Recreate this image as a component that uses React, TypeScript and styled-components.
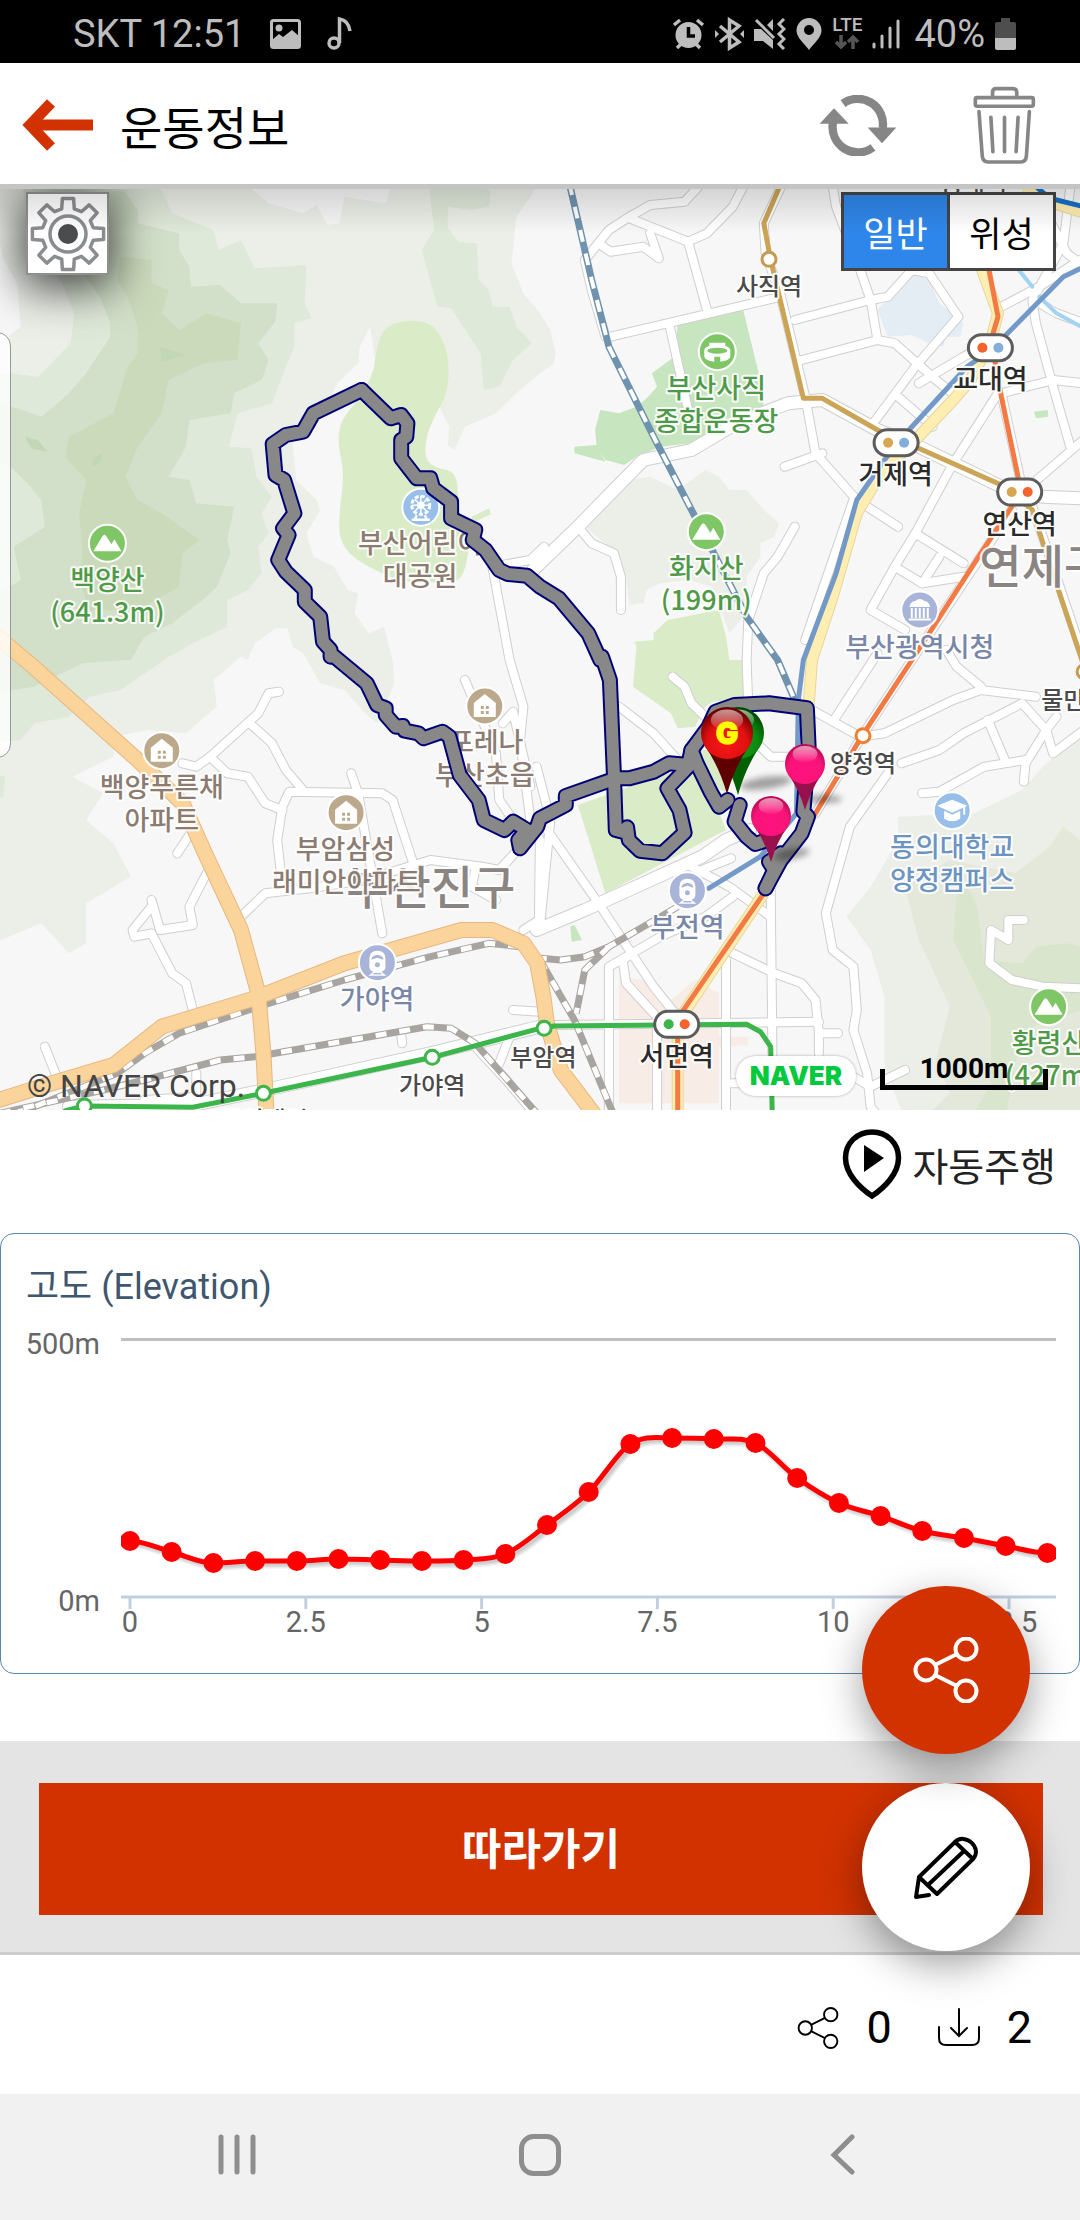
import React from 'react';
import styled, { createGlobalStyle } from 'styled-components';

const GlobalStyle = createGlobalStyle`
  *, *::before, *::after { box-sizing: border-box; }
  body {
    margin: 0;
    background: #fff;
    font-family: Roboto, "Noto Sans CJK KR", sans-serif;
    color: #000;
  }
  button { font: inherit; color: inherit; border: 0; padding: 0; background: none; cursor: pointer; }
  svg { display: block; flex: none; }
`;

/* ---------- layout ---------- */

const Screen = styled.div`
  display: flex;
  flex-direction: column;
  min-height: 100vh;
`;

const StatusBar = styled.div`
  display: flex;
  justify-content: space-between;
  align-items: center;
  height: 63px;
  padding: 4px 64px 0 73px;
  background: #000;
  color: #bdbdbd;
  font-size: 38px;
`;

const StatusGroup = styled.div<{ $gap: number }>`
  display: flex;
  align-items: center;
  gap: ${(p) => p.$gap}px;
`;

const Network = styled.span`
  display: flex;
  flex-direction: column;
  align-items: center;
  gap: 3px;
  font-size: 19px;
  font-weight: 500;
  line-height: 14px;
`;

const Percent = styled.span`
  margin-left: 4px;
`;

const Header = styled.header`
  display: flex;
  align-items: center;
  height: 126px;
  padding: 3px 44px 0 22px;
  border-bottom: 5px solid #c4c4c4;
  background: #fff;
`;

const Title = styled.h1`
  flex: 1;
  margin: 0 0 0 26px;
  font: 400 46px/60px "Noto Sans CJK KR", sans-serif;
`;

const HeaderActions = styled.div`
  display: flex;
  align-items: center;
  gap: 76px;
`;

const IconButton = styled.button`
  display: flex;
  align-items: center;
  justify-content: center;
`;

const MapView = styled.section`
  position: relative;
  height: 921px;
  overflow: hidden;
  background: #f7f7f7;

  &::after {
    content: "";
    position: absolute;
    inset: 0 0 auto;
    height: 44px;
    background: linear-gradient(rgba(0, 0, 0, 0.14), rgba(0, 0, 0, 0));
    pointer-events: none;
  }
`;

const MapSvg = styled.svg`
  width: 100%;
  height: 100%;
`;

const GearButton = styled(IconButton)`
  position: absolute;
  top: 3px;
  left: 26px;
  width: 83px;
  height: 83px;
  border: 2px solid #8f8f8f;
  background: #fff;
  box-shadow: 0 8px 46px 4px rgba(0, 0, 0, 0.75);
`;

const SideHandle = styled.div`
  position: absolute;
  top: 143px;
  left: -20px;
  width: 31px;
  height: 426px;
  border: 1px solid #999;
  border-radius: 14px;
  background: rgba(255, 255, 255, 0.8);
`;

const MapTypes = styled.div`
  position: absolute;
  top: 3px;
  right: 24px;
  display: flex;
  border: 3px solid #444;
  background: #444;
  gap: 3px;
`;

const MapType = styled.button<{ $active?: boolean }>`
  width: 103px;
  height: 73px;
  font: 400 35px/60px "Noto Sans CJK KR", sans-serif;
  color: ${(p) => (p.$active ? '#fff' : '#000')};
  background: ${(p) => (p.$active ? '#2f86ea' : '#fff')};
`;

const MapFooter = styled.div`
  position: absolute;
  left: 27px;
  right: 32px;
  bottom: 8px;
  display: flex;
  align-items: flex-end;
`;

const Copyright = styled.span`
  flex: 1;
  color: #444;
  font-size: 32px;
  line-height: 32px;
`;

const NaverLink = styled.a`
  margin: 0 24px 6px 0;
  width: 120px;
  border-radius: 20px;
  background: #fff;
  box-shadow: 0 0 3px rgba(0, 0, 0, 0.3);
  color: #03c93f;
  font: 900 26px/40px Inter, sans-serif;
  text-align: center;
  text-decoration: none;
`;

const ScaleBar = styled.div`
  position: relative;
  width: 168px;
  height: 21px;
  margin-bottom: 12px;
  border: 5px solid #000;
  border-top: 0;
`;

const ScaleText = styled.span`
  position: absolute;
  inset: auto 0 0;
  text-align: center;
  font-size: 28px;
  font-weight: 700;
  line-height: 32px;
`;

const Details = styled.main`
  position: relative;
  background: #fff;
`;

const AutoRunRow = styled.div`
  display: flex;
  justify-content: flex-end;
  padding: 18px 24px 33px;
`;

const AutoRunButton = styled.button`
  display: flex;
  align-items: center;
  gap: 10px;
  color: #222;
  font: 400 39px/72px "Noto Sans CJK KR", sans-serif;
`;

const Card = styled.section`
  border: 1px solid #5b85ad;
  border-radius: 14px;
  margin-bottom: 67px;
  padding: 26px 0 0;
  min-height: 441px;
`;

const CardTitle = styled.h2`
  margin: 0 25px;
  color: #3e576f;
  font: 400 36px/54px Roboto, "Noto Sans CJK KR", sans-serif;
`;

const Chart = styled.svg`
  width: 100%;
  height: auto;
`;

const ActionArea = styled.div`
  padding: 42px 37px 37px 39px;
  border-bottom: 3px solid #ccc;
  background: #e4e4e4;
`;

const FollowButton = styled.button`
  display: block;
  width: 100%;
  height: 132px;
  padding-bottom: 6px;
  background: #d23200;
  color: #fff;
  font: 700 43px/60px "Noto Sans CJK KR", sans-serif;
`;

const FabStack = styled.div`
  position: absolute;
  right: 50px;
  bottom: 4px;
  display: flex;
  flex-direction: column;
  gap: 29px;
`;

const Fab = styled.button<{ $accent?: boolean }>`
  display: flex;
  align-items: center;
  justify-content: center;
  width: 168px;
  height: 168px;
  border-radius: 50%;
  background: ${(p) => (p.$accent ? '#d23200' : '#fff')};
  color: ${(p) => (p.$accent ? '#fff' : '#000')};
  box-shadow: 0 14px 40px rgba(0, 0, 0, 0.38);

  /* the upper button also shades the one under it */
  ${(p) => (p.$accent ? 'position: relative; z-index: 1;' : '')}
`;

const Stats = styled.footer`
  display: flex;
  justify-content: flex-end;
  align-items: center;
  gap: 46px;
  height: 139px;
  padding: 6px 48px 0 0;
`;

const Stat = styled.span`
  display: flex;
  align-items: center;
  gap: 27px;
  font-size: 45px;
  line-height: 52px;
`;

const NavBar = styled.nav`
  display: grid;
  grid-template-columns: repeat(3, 1fr);
  flex: 1;
  min-height: 126px;
  padding: 0 86px 4px;
  background: #f1f1f1;
`;

/* ---------- map data ---------- */

// Map geometry is kept per sheet; a sheet name in a list switches the origin.
const SHEETS: Record<string, [number, number]> = {
  nw: [0, -9],
  ne: [540, -9],
  sw: [0, 451],
  se: [540, 451],
};

function project(sheet: string, x: number, y: number): [number, number] {
  const [ox, oy] = SHEETS[sheet];
  return [Math.round((ox + x / 2.904) * 10) / 10, Math.round((oy + y / 3) * 10) / 10];
}

function trace(list: string): string {
  const out: string[] = [];
  let sheet = 'nw';
  const tokens = list.trim().split(/\s+/);
  for (let i = 0; i < tokens.length; i++) {
    if (tokens[i] in SHEETS) {
      sheet = tokens[i];
    } else {
      out.push(project(sheet, +tokens[i], +tokens[i + 1]).join(','));
      i++;
    }
  }
  return out.join(' ');
}

function smooth(list: string): string {
  const p = trace(list).split(' ').map((s) => s.split(',').map(Number));
  const mid = (a: number[], b: number[]) => `${(a[0] + b[0]) / 2} ${(a[1] + b[1]) / 2}`;
  const n = p.length;
  let d = `M${mid(p[n - 1], p[0])}`;
  p.forEach((q, i) => {
    d += `Q${q[0]} ${q[1]} ${mid(q, p[(i + 1) % n])}`;
  });
  return d + 'Z';
}

const TERRAIN: [string, string][] = [
  ['#ecefe8', 'nw -20 0 700 0 780 70 880 100 920 75 950 135 985 130 1000 50 1120 70 1140 0 1568 0 1540 50 1500 110 1485 250 1520 340 1568 400 ne 30 450 45 520 40 550 0 580 nw 1500 640 1440 700 1350 740 1320 810 1300 795 1305 740 1280 690 1200 500 1110 500 1090 540 1075 440 1045 500 1040 550 980 610 960 650 850 790 860 900 920 960 930 990 890 1060 910 1130 970 1160 1010 1230 1040 1240 1030 1300 1070 1360 1115 1340 1140 1440 sw 1145 130 1130 170 1095 250 1060 220 1000 150 930 130 880 40 nw 850 1400 835 1345 800 1345 740 1390 720 1440 sw 700 50 620 120 630 200 540 280 430 270 330 290 330 350 210 410 300 460 250 540 330 610 380 710 250 790 250 910 200 940 120 850 -20 910'],
  ['#f7f7f7', 'nw -20 100 10 240 50 310 60 440 0 490 -20 490'],
  ['#dfe9d9', 'nw 60 0 240 0 470 30 500 100 620 150 635 210 700 180 740 265 890 255 885 370 905 415 855 430 855 500 830 560 790 670 690 700 665 800 730 805 745 890 790 950 760 1000 780 1060 750 1100 760 1180 720 1230 660 1260 660 1340 560 1390 490 1430 sw 490 50 350 150 260 170 200 230 100 250 60 300 -20 310 nw -20 590 30 580 110 590 205 490 215 400 180 310 100 200'],
  ['#dfe9d9', 'nw 1245 0 1425 30 1420 80 1370 90 1300 80 1300 140 1330 185 1385 190 1390 300 1420 330 1430 380 1480 380 1500 440 1545 490 1490 540 1450 620 1405 630 1395 520 1310 385 1270 380 1225 210 1260 150'],
  ['#dfe9d9', 'sw -20 400 15 410 10 470 -20 480'],
  ['#d3e0c9', 'nw 200 50 360 30 400 90 400 130 520 160 520 210 550 260 555 320 640 315 700 370 805 370 800 425 750 490 780 540 760 600 680 640 670 700 550 720 540 800 490 890 550 900 570 970 680 980 660 1080 670 1120 630 1220 600 1250 500 1330 420 1370 380 1440 sw 370 60 240 70 100 140 -20 160 nw -20 1250 60 1200 40 1100 130 1040 120 960 80 910 30 860 -20 840 -20 660 120 710 200 640 250 580 320 470 320 430 290 350 240 280'],
  ['#ccdabc', 'nw 350 230 440 240 440 310 490 330 470 400 520 450 600 400 700 430 690 540 590 550 490 600 470 700 400 800 365 890 400 960 470 1000 580 1080 530 1120 520 1220 400 1290 260 1290 230 1200 240 1120 230 1000 250 900 190 830 200 770 330 700 370 560 400 520 400 440 370 350 340 300'],
  ['#c2d7b5', 'nw 465 500 540 525 470 545'],
  ['#c2d7b5', 'nw 270 835 300 815 290 850 270 860'],
  ['#c2d7b5', 'nw 72 770 110 780 138 815 90 805'],
  ['#ecefe8', 'ne 130 1040 180 960 260 900 320 890 400 930 480 870 520 890 550 930 600 930 650 990 695 1030 680 1070 640 1090 640 1130 600 1190 600 1300 550 1360 500 1220 430 1200 350 1210 310 1230 300 1270 260 1275 250 1200 200 1100'],
  ['#c7e5bf', 'ne 400 435 590 390 635 580 650 680 440 790 350 800 280 830 245 855 190 840 165 800 160 750 175 690 230 700 280 680 310 655 340 620 325 580 390 530'],
  ['#c7e5bf', 'ne 100 800 165 795 190 845 100 820'],
  ['#c7e5bf', 'ne 1435 695 1475 690 1475 710 1440 715'],
  ['#c7e5bf', 'se 88 860 100 855 122 900 92 905'],
  ['#e4ecf4', 'ne 980 390 1080 280 1130 300 1160 370 1230 430 1220 470 1180 470 1170 500 1130 490 1080 465 1010 470'],
  ['#d9ecc7', 'ne 330 1360 370 1320 520 1290 540 1370 550 1440 se 590 60 590 180 500 185 480 200 450 260 400 265 380 220 270 140 280 20 ne 275 1385 330 1380'],
  ['#d9ecc7', 'se 110 495 370 400 470 390 540 570 190 760'],
  ['#d9ecc7', 'se 450 330 500 330 550 460 500 440'],
  ['#ecefe8', 'se 1568 280 1460 380 1400 450 1260 520 1040 530 1040 600 960 740 890 830 960 930 1000 1070 1000 1280 1060 1440 1600 1440'],
  ['#e4e8db', 'se 1060 740 1190 660 1380 700 1480 620 1520 560 1568 600 1600 1440 1110 1440 1190 1360 1150 1260 1190 1100 1100 900'],
  ['#dae5cd', 'se 1210 760 1240 740 1270 800 1290 960 1400 970 1440 920 1530 910 1600 930 1600 1100 1400 1170 1350 1440 1250 1440 1310 1330 1310 1130 1200 900'],
  ['#f7ece6', 'se 230 1010 300 1020 380 1080 450 1020 520 1060 520 1190 605 1190 605 1215 520 1220 520 1390 230 1390'],
];

const PARK = 'nw 1090 520 1110 450 1160 422 1240 422 1280 465 1305 540 1300 640 1260 710 1235 780 1235 840 1270 865 1325 875 1332 970 1340 1040 1370 1050 1350 1180 1320 1210 1200 1205 1150 1200 1030 1140 985 1080 985 1000 1000 880 980 790 990 720 1040 660 1085 580';

const STREETS = [
  'ne 460 20 420 65 320 75 260 110 200 150 130 240 150 330 190 470',
  'ne 260 115 430 185 485 160 560 80 590 20',
  'ne 430 185 485 390',
  'ne 205 470 700 350',
  'ne 375 430 430 690',
  'ne 170 190 205 215 300 200 345 235 320 160',
  'ne 700 20 650 130 655 220 700 350 770 650 800 820 920 960 1040 1040',
  'ne 710 860 820 820',
  'ne 110 1040 150 1090 215 1120 235 1190 235 1290',
  'ne 740 420 960 360 1010 350 1080 270 1130 280 1215 410 1090 560 960 740',
  'ne 850 20 860 80 930 270 960 360 980 480 1030 490 1150 600 1210 650',
  'ne 760 540 980 480',
  'ne 1040 650 1140 740',
  'ne 1100 610 1230 530 1320 480',
  'ne 1340 380 1450 320 1568 240',
  'ne 1540 20 1520 190 1430 360 1440 430 1490 620 1540 800',
  'ne 1430 20 1530 220 1580 260',
  'ne 1450 370 1500 400 1580 430',
  'ne 1340 640 1490 600 1580 610',
  'ne 1330 640 1200 850 1090 1060 1030 1160 960 1290 1060 1350',
  'ne 1600 760 1420 920',
  'ne 1090 1060 1230 1150',
  'ne 1030 1160 1110 1210 1230 1190',
  'ne 1110 1210 1160 1130',
  'ne 740 1040 690 1130 650 1180 605 1320 600 1440 se 605 200',
  'ne 910 960 770 1380',
  'ne 1340 640 1395 900',
  'ne 1430 980 1470 1100 1568 1400',
  'ne 1370 990 1080 1440 se 940 280 800 520',
  'se 385 110 420 140 440 190 480 230',
  'se 230 200 330 280 400 360',
  'se 0 540 170 790 330 1040 400 1130',
  'se -10 380 30 540 0 860',
  'se 630 310 670 350 740 350',
  'se 790 210 930 290 1000 280 1200 180 1280 150 1440 170',
  'se 860 230 980 40',
  'se 1180 30 1210 80 1280 140',
  'se 1050 370 1160 330 1230 280 1400 190 1470 270 1490 340 1580 270',
  'se 1300 240 1350 360',
  'se 1500 230 1470 270 1410 370 1405 425',
  'se 1110 460 1160 455 1290 380 1410 360',
  'se 1010 400 900 560 830 820 850 930 910 980 920 1110 910 1170 950 1300 960 1400 990 1440',
  'se 670 750 675 1240',
  'se 540 960 540 1440',
  'se 340 1130 340 1440',
  'se 200 1440 200 980 350 890 480 830 560 770',
  'se 560 940 680 1000 760 1030 800 1080 810 1180 810 1240',
  'se 40 1155 810 1145',
  'se 810 1180 865 1180',
  'se 270 940 240 960 250 1030 330 1120',
  'se 420 670 550 740 670 830',
  'se 470 690 555 655',
  'se 1405 840 1360 840 1360 900 1310 870 1305 970 1370 1020 1460 1040 1580 1045',
  'se 1060 1290 960 1340 910 1310',
  'se 540 1330 620 1330',
  'sw 810 155 780 160 750 220 610 350 570 380 530 370',
  'sw 725 250 790 310 830 390 880 450',
  'sw 610 350 660 400 720 410 770 490 820 510',
  'sw 1020 400 1040 460 1110 880',
  'sw 1200 670 1140 480 1110 460 840 455 820 500 805 600 820 740',
  'sw 700 830 770 760 900 745 1060 720 1250 660 1400 680 1450 690 1530 600',
  'sw 1380 690 1370 740 1440 780',
  'sw 515 640 560 570',
  'sw 600 700 550 800 560 855 465 870 440 780',
  'sw 440 800 385 870 390 890 440 880 500 1000 540 1030 560 1110',
  'sw 130 1220 165 1310',
  'sw 1350 120 1400 240 1440 340 1450 480 1490 540',
  'nw 1430 1160 1480 1440 sw 1520 200 1510 300 1540 540 1568 600 1565 840 1520 870',
  'nw 1430 1160 1540 1140 1580 1100',
  'sw 1460 250 1490 215 1540 440',
  'sw 1490 1110 1568 1115',
  'sw 1165 1185 1168 1210',
  'sw 1380 1220 1470 1320 1568 1440',
  'sw 1450 1270 1480 1190',
  'sw 420 1380 570 1370 570 1300',
];

const AVENUES = [
  'ne -20 1170 110 1040 300 840 440 810 570 730 720 670 820 660 980 750 1100 800 1200 850 1340 920 1460 950 1580 955',
  'se -10 870 130 810 470 650 540 600 610 570',
  'sw 200 1400 560 1395 770 1350 1250 1240 1568 1160',
];

const HIGHWAYS = [
  'nw -30 1350 85 1450 sw 400 360 530 490 600 650 700 870 750 1060 765 1240 775 1440',
  'sw -20 1385 150 1330 330 1275 470 1160 740 1075 1000 970 1340 870 1430 870 1520 910 1560 970 se 10 1070 20 1150 60 1290 170 1440',
];

const YELLOW = [
  'ne 1280 260 1330 400 1310 480 1250 600 1200 660 1090 780 990 880 920 1000 850 1250 790 1440 se 780 200',
  'ne 1410 20 1480 65 1600 105',
  'se 650 760 410 1130',
  'se 400 1180 400 1440',
];

const RAILS = [
  'sw 1568 955 1510 920 1420 910 1250 950 1000 1020 750 1100 520 1180 420 1240 340 1300 100 1400 40 1420',
  'sw 0 1420 300 1350 420 1320 640 1260 740 1250 1240 1160 1310 1165 1380 1210 1568 1430',
  'se 400 800 200 920 130 950 60 960 0 955',
  'se 0 960 100 1140 220 1440',
  'se 200 920 130 990 105 1120',
];

const TRAM = 'ne 85 10 150 300 200 500 330 770 450 1010 500 1110 600 1310 690 1440 se 740 180';

const METRO: [string, string][] = [
  ['#7399c9', 'ne 1580 260 1520 290 1310 510 1240 560 1080 740 1000 840 920 960 860 1180 765 1440 se 750 180 745 520 640 650 490 745'],
  ['#cba455', 'ne 700 10 650 130 670 240 700 370 765 655 820 655 980 750 1340 915 1430 990 1470 1120 1580 1460'],
  ['#f47a45', 'ne 1300 250 1330 410 1310 480 1340 650 1390 900 1370 980 1280 1120 1080 1440 se 940 280 800 520 650 760 410 1120 400 1180 400 1440'],
  ['#3cb54a', 'sw 190 1412 245 1398 560 1402 765 1360 1255 1252 1568 1165 se 15 1165 40 1158 600 1153 640 1175 670 1220 675 1440'],
  ['#1470c8', 'ne 1430 10 1480 55 1580 80'],
];

const ROUTES = [
  'nw 1050 630 1135 715 1165 705 1183 730 1180 770 1165 780 1165 835 1210 895 1250 895 1258 925 1310 965 1310 1015 1380 1050 1373 1080 1410 1110 1450 1170 1475 1182 1530 1187 1568 1220 ne 55 1255 140 1360 175 1440 se 180 50 203 120 215 410 220 570 240 575 253 562 258 600 290 632 355 640 420 578 405 510 370 445 440 370',
  'nw 1050 630 910 700 880 755 830 765 792 792 800 885 825 900 855 1000 822 1045 838 1065 808 1140 830 1175 885 1230 885 1265 930 1310 938 1385 960 1410 960 1430 sw 960 40 1065 130 1095 195 1120 205 1120 225 1150 260 1170 258 1175 272 1215 280 1230 295 1285 275 1305 290 1335 405 1390 480 1405 540 1465 570 1490 545 1530 570 1505 600 1510 625 1560 560 1568 535 se 75 495 75 468 220 415 260 415 330 395 375 370 430 375 440 330 490 260 510 215 565 195 665 190 775 205 780 320 765 515 778 530 760 580 700 660 655 745',
  'se 440 330 455 370 495 455 520 500 545 480',
  'se 580 495 565 545 600 590 625 612 660 600',
  'se 655 745 680 690 665 665 700 640',
];

const GREEN = '#4f9a48';
const BROWN = '#8b7b70';
const SLATE = '#7886a8';
const DARK = '#4a4a4a';
const INK = '#2a2a2a';
const SKY = '#6c94c2';

type Label = [string, number, number, string, string, number];
const LABELS: Label[] = [
  ['sw', 1251, 792, '부산진구', '#8a8482', 46],
  ['ne', 1460, 1208, '연제구', '#8a8482', 46],
  ['nw', 312, 1230, '백양산', GREEN, 27],
  ['nw', 312, 1327, '(641.3m)', GREEN, 27],
  ['nw', 1220, 1120, '부산어린이', BROWN, 27],
  ['nw', 1220, 1219, '대공원', BROWN, 27],
  ['ne', 512, 654, '부산사직', GREEN, 27],
  ['ne', 512, 754, '종합운동장', GREEN, 27],
  ['ne', 483, 1194, '화지산', GREEN, 27],
  ['ne', 483, 1290, '(199m)', GREEN, 27],
  ['ne', 665, 345, '사직역', DARK, 24],
  ['ne', 1260, 36, '동래역', DARK, 24],
  ['ne', 1308, 628, '교대역', INK, 27],
  ['ne', 1033, 912, '거제역', INK, 27],
  ['ne', 1393, 1062, '연산역', INK, 27],
  ['ne', 1103, 1430, '부산광역시청', SLATE, 27],
  ['sw', 470, 470, '백양푸른채', BROWN, 27],
  ['sw', 470, 569, '아파트', BROWN, 27],
  ['sw', 1412, 335, '포레나', BROWN, 27],
  ['sw', 1408, 434, '부산초읍', BROWN, 27],
  ['sw', 1003, 656, '부암삼성', BROWN, 27],
  ['sw', 1006, 756, '래미안아파트', BROWN, 27],
  ['sw', 1095, 1106, '가야역', SLATE, 27],
  ['sw', 1255, 1363, '가야역', DARK, 24],
  ['sw', 1578, 1278, '부암역', DARK, 24],
  ['sw', 766, 1466, '동의대역', DARK, 24],
  ['se', 938, 396, '양정역', DARK, 24],
  ['se', 428, 890, '부전역', SLATE, 27],
  ['se', 397, 1278, '서면역', INK, 27],
  ['se', 1197, 650, '동의대학교', SKY, 27],
  ['se', 1197, 750, '양정캠퍼스', SKY, 27],
  ['se', 1584, 208, '물만골역', DARK, 24],
  ['se', 1478, 1240, '황령산', GREEN, 27],
  ['se', 1482, 1335, '(427m)', GREEN, 27],
];

type Glyph = 'peak' | 'wheel' | 'stadium' | 'hall' | 'house' | 'train' | 'school';
const POIS: [string, number, number, Glyph, string][] = [
  ['nw', 312, 1090, 'peak', '#7fc667'],
  ['nw', 1222, 982, 'wheel', '#97bfe9'],
  ['ne', 515, 515, 'stadium', '#7fc667'],
  ['ne', 483, 1055, 'peak', '#7fc667'],
  ['ne', 1103, 1290, 'hall', '#a9b4d9'],
  ['sw', 470, 332, 'house', '#bca98c'],
  ['sw', 1005, 518, 'house', '#bca98c'],
  ['sw', 1408, 198, 'house', '#bca98c'],
  ['sw', 1096, 968, 'train', '#a9b4d9'],
  ['se', 428, 752, 'train', '#a9b4d9'],
  ['se', 1197, 512, 'school', '#97bfe9'],
  ['se', 1477, 1100, 'peak', '#7fc667'],
];

const INTERCHANGES: [string, number, number, string, string][] = [
  ['ne', 1308, 503, '#f4632e', '#83addb'],
  ['ne', 1034, 788, '#d6a653', '#83addb'],
  ['ne', 1393, 936, '#d6a653', '#f4632e'],
  ['se', 397, 1153, '#3cb54a', '#f4632e'],
];

const STATIONS: [string, number, number, string][] = [
  ['ne', 665, 238, '#c69a50'],
  ['se', 938, 287, '#f08030'],
  ['se', 1580, 95, '#c69a50'],
  ['sw', 765, 1360, '#3cb54a'],
  ['sw', 1255, 1252, '#3cb54a'],
  ['se', 12, 1165, '#3cb54a'],
  ['sw', 245, 1398, '#3cb54a'],
];

function PoiGlyph({ kind, color }: { kind: Glyph; color: string }) {
  switch (kind) {
    case 'peak':
      return <path d="M-14 8 L-5 -7 Q-3 -10 -1 -7 L4 1 L7 -4 L14 8Z" fill="#fff" />;
    case 'wheel':
      return (
        <g stroke="#fff" fill="none" strokeWidth="1.5">
          <circle cy="-2" r="9" strokeWidth="3" strokeDasharray="4 2" />
          <path d="M0 -11V7M-9 -2H9M-6 -8L6 4M6 -8L-6 4" />
          <circle cy="-2" r="3" fill="#fff" />
          <path d="M-4 8L-6 12M4 8L6 12M-9 12.500H9" strokeWidth="2.500" />
        </g>
      );
    case 'stadium':
      return (
        <g fill="#fff">
          <path d="M-8 -9H8V-6Q14 -4 13 0V5Q12 9 3 10V5H-3V10Q-12 9 -13 5V0Q-14 -4 -8 -6Z" />
          <ellipse cy="-1" rx="10" ry="3" fill={color} />
        </g>
      );
    case 'hall':
      return <path d="M-11 9.500H11M-8 8V-2M-4 8V-2M0 8V-2M4 8V-2M8 8V-2M-9 -4Q-8 -8 -4 -8Q-3 -10 0 -10Q3 -10 4 -8Q8 -8 9 -4Z" stroke="#fff" fill="#fff" strokeWidth="2" />;
    case 'house':
      return (
        <g>
          <path d="M0 -12 L11 -3 V11 H-11 V-3Z" fill="#fff" />
          <path d="M-4 0h3v3h-3zM1 0h3v3h-3zM-4 5h3v3h-3zM1 5h3v3h-3z" fill={color} />
        </g>
      );
    case 'train':
      return (
        <g>
          <path d="M-8 4V-4Q-8 -12 0 -12Q8 -12 8 -4V4Q8 8 4 9L9 13H-9L-4 9Q-8 8 -8 4Z" fill="#fff" />
          <path d="M-6 -3Q-6 -7 0 -8Q6 -7 6 -3L0 -5Z" fill={color} />
          <circle cy="2" r="2.500" fill={color} />
          <path d="M-4 11H4" stroke={color} strokeWidth="1.500" />
        </g>
      );
    case 'school':
      return (
        <g fill="#fff">
          <path d="M0 -11L15 -5L0 2L-15 -5Z" />
          <path d="M-8 0L0 4L8 0V8Q0 13 -8 8Z" />
          <path d="M12 -5V4" stroke="#fff" strokeWidth="2" />
        </g>
      );
  }
}

function Lines({ items, color, width, cap = 'round' }: { items: string[]; color: string; width: number; cap?: 'round' | 'butt' }) {
  return (
    <g fill="none" stroke={color} strokeWidth={width} strokeLinejoin="round" strokeLinecap={cap}>
      {items.map((s, i) => <polyline key={i} points={trace(s)} />)}
    </g>
  );
}

function Pin({ x, y, r, up, head, stem, letter }: { x: number; y: number; r: number; up: number; head: string; stem: string; letter?: string }) {
  return (
    <g transform={`translate(${x} ${y})`}>
      <path d={`M0 0 Q${-r * 0.3} ${-up * 0.45} ${-r * 0.85} ${-up + r * 0.5} H${r * 0.85} Q${r * 0.3} ${-up * 0.45} 0 0Z`} fill={stem} />
      <circle cy={-up} r={r} fill={head} />
      <ellipse cy={-up - r * 0.5} rx={r * 0.62} ry={r * 0.4} fill="url(#shine)" />
      {letter && (
        <text y={-up + 11} textAnchor="middle" fontFamily="Inter" fontWeight="900" fontSize="30" fill="#ffff00" stroke="#ffff00" strokeWidth="1">
          {letter}
        </text>
      )}
    </g>
  );
}

function TrailMap() {
  return (
    <MapSvg viewBox="0 0 1080 921" preserveAspectRatio="xMidYMid slice" role="img" aria-label="운동 경로 지도">
      <defs>
        <linearGradient id="shine" x1="0" y1="0" x2="0" y2="1">
          <stop offset="0" stopColor="#fff" stopOpacity="0.6" />
          <stop offset="1" stopColor="#fff" stopOpacity="0.05" />
        </linearGradient>
        <radialGradient id="redHead" cx="0.5" cy="0.7" r="0.65">
          <stop offset="0" stopColor="#f81818" />
          <stop offset="0.6" stopColor="#e01010" />
          <stop offset="1" stopColor="#6e0000" />
        </radialGradient>
        <radialGradient id="greenHead" cx="0.5" cy="0.7" r="0.65">
          <stop offset="0" stopColor="#18a018" />
          <stop offset="0.6" stopColor="#0a8a10" />
          <stop offset="1" stopColor="#004a00" />
        </radialGradient>
        <radialGradient id="pinkHead" cx="0.5" cy="0.65" r="0.6">
          <stop offset="0" stopColor="#ff1280" />
          <stop offset="0.7" stopColor="#f81478" />
          <stop offset="1" stopColor="#c00a58" />
        </radialGradient>
        <filter id="soft" x="-30%" y="-100%" width="160%" height="300%"><feGaussianBlur stdDeviation="3" /></filter>
      </defs>

      {TERRAIN.map(([fill, pts], i) => <polygon key={i} points={trace(pts)} fill={fill} />)}
      <path d={smooth(PARK)} fill="#d9ecc7" />
      <polygon points={trace('nw 1370 1010 1420 985 1425 1003 1370 1030')} fill="#d9ecc7" />

      <Lines items={AVENUES} color="#cfcfcf" width={14} />
      <Lines items={STREETS} color="#cfcfcf" width={10} />
      <Lines items={STREETS} color="#fff" width={8} />
      <Lines items={AVENUES} color="#fff" width={12} />
      <Lines items={YELLOW} color="#e8d69a" width={12} cap="butt" />
      <Lines items={YELLOW} color="#ffeeb2" width={10} />
      <Lines items={['ne 1390 270 1430 320', 'ne 1450 350 1500 400 1580 445']} color="#a3d3f3" width={4} />

      <Lines items={RAILS} color="#a8a49f" width={7} cap="butt" />
      <g fill="none" stroke="#fff" strokeWidth="5" strokeDasharray="11 13">
        {RAILS.map((s, i) => <polyline key={i} points={trace(s)} />)}
      </g>
      <Lines items={HIGHWAYS} color="#e6b880" width={16} />
      <Lines items={HIGHWAYS} color="#fad49a" width={14} />
      <Lines items={[TRAM]} color="#6f93ae" width={7} cap="butt" />
      <polyline points={trace(TRAM)} fill="none" stroke="#fff" strokeWidth="4" strokeDasharray="12 12" />
      {METRO.map(([c, s], i) => <Lines key={i} items={[s]} color={c} width={5} />)}

      {STATIONS.map(([s, x, y, c], i) => {
        const [cx, cy] = project(s, x, y);
        return <circle key={i} cx={cx} cy={cy} r="7" fill="#fff" stroke={c} strokeWidth="3" />;
      })}
      {INTERCHANGES.map(([s, x, y, a, b], i) => {
        const [cx, cy] = project(s, x, y);
        return (
          <g key={i} transform={`translate(${cx} ${cy})`}>
            <rect x="-22" y="-13" width="44" height="26" rx="13" fill="#fff" stroke="#5c5c5c" strokeWidth="3" />
            <circle cx="-8" r="5" fill={a} />
            <circle cx="8" r="5" fill={b} />
          </g>
        );
      })}
      {POIS.map(([s, x, y, kind, color], i) => {
        const [cx, cy] = project(s, x, y);
        return (
          <g key={i} transform={`translate(${cx} ${cy})`}>
            <circle r="18.500" fill={color} stroke="#fff" strokeWidth="2" />
            <PoiGlyph kind={kind} color={color} />
          </g>
        );
      })}
      <g textAnchor="middle" fontFamily='"Noto Sans CJK KR", sans-serif' fontWeight="500" stroke="#fff" strokeOpacity="0.9" strokeLinejoin="round" paintOrder="stroke">
        {LABELS.map(([s, x, y, text, color, size], i) => {
          const [tx, ty] = project(s, x, y);
          return <text key={i} x={tx} y={ty} fontSize={size} fill={color} strokeWidth="4">{text}</text>;
        })}
      </g>

      <Lines items={ROUTES} color="#000078" width={16} />
      <Lines items={ROUTES} color="#888" width={12} />

      <g fill="#000" opacity="0.35" filter="url(#soft)">
        <ellipse cx="766" cy="594" rx="26" ry="6" transform="rotate(-8 766 594)" />
        <ellipse cx="824" cy="610" rx="18" ry="4" />
        <ellipse cx="792" cy="665" rx="18" ry="5" transform="rotate(-10 792 665)" />
      </g>
      <Pin x={738} y={606} r={26} up={62} head="url(#greenHead)" stem="#006000" />
      <Pin x={727} y={605} r={26} up={61} head="url(#redHead)" stem="#5e0000" letter="G" />
      <Pin x={805} y={621} r={20} up={46} head="url(#pinkHead)" stem="#98104c" />
      <Pin x={771} y={673} r={20} up={46} head="url(#pinkHead)" stem="#98104c" />
    </MapSvg>
  );
}

/* ---------- chart ---------- */

const ELEVATION = [1541, 1552, 1563, 1561, 1561, 1559, 1560, 1561, 1560, 1554, 1525, 1492, 1444, 1438, 1439, 1443, 1478, 1503, 1516, 1531, 1538, 1546, 1553]
  .map((y, i) => [130 + i * 41.7, y - 1314]);
const TICKS = ['0', '2.5', '5', '7.5', '10', '12.5'];

function curve(p: number[][]): string {
  let d = `M${p[0][0]} ${p[0][1]}`;
  for (let i = 0; i < p.length - 1; i++) {
    const a = p[Math.max(i - 1, 0)], b = p[i], c = p[i + 1], e = p[Math.min(i + 2, p.length - 1)];
    const slope = (u: number[], v: number[], w: number[]) =>
      (v[1] - u[1]) * (w[1] - v[1]) <= 0 ? 0 : (w[1] - u[1]) / 6;
    d += `C${b[0] + 14} ${b[1] + slope(a, b, c)} ${c[0] - 14} ${c[1] - slope(b, c, e)} ${c[0]} ${c[1]}`;
  }
  return d;
}

function ElevationChart() {
  const line = curve(ELEVATION);
  return (
    <Chart viewBox="1 0 1078 350" role="img" aria-label="고도 그래프">
      <clipPath id="plot"><rect x="121" y="0" width="935" height="300" /></clipPath>
      <path d="M121 25.500H1056" stroke="#c0c0c0" strokeWidth="3" />
      <path d="M121 283H1056" stroke="#c0d0e0" strokeWidth="3" />
      <g fontFamily="Roboto" fontSize="29" fill="#666">
        <text x="100" y="40" textAnchor="end">500m</text>
        <text x="100" y="297" textAnchor="end">0m</text>
        {TICKS.map((t, i) => (
          <g key={t}>
            <path d={`M${130 + i * 175.8} 283v12`} stroke="#c0d0e0" strokeWidth="3" />
            <text x={130 + i * 175.8} y="318" textAnchor="middle">{t}</text>
          </g>
        ))}
      </g>
      <g clipPath="url(#plot)">
        <g fill="none" stroke="#000" strokeOpacity="0.07" transform="translate(3 3)">
          <path d={line} strokeWidth="9" />
          <path d={line} strokeWidth="6" />
          <path d={line} strokeWidth="3" />
        </g>
        <path d={line} fill="none" stroke="#f00" strokeWidth="5" />
        {ELEVATION.map(([x, y], i) => <circle key={i} cx={x} cy={y} r="10" fill="#f00" />)}
      </g>
    </Chart>
  );
}

/* ---------- icons ---------- */

const ShareIcon = ({ size, stroke }: { size: number; stroke: number }) => (
  <svg width={size} height={size} viewBox="0 0 66 66" fill="none" stroke="currentColor" strokeWidth={stroke}>
    <circle cx="13" cy="33" r="10.500" />
    <circle cx="53" cy="12" r="10.500" />
    <circle cx="53" cy="54" r="10.500" />
    <path d="M22 28L44 17M22 38L44 49" />
  </svg>
);

const TEETH = Array.from({ length: 8 }, (_, i) => {
  const at = (r: number, deg: number) => {
    const a = ((i * 45 + deg - 90) * Math.PI) / 180;
    return `${(39 + r * Math.cos(a)).toFixed(1)} ${(39 + r * Math.sin(a)).toFixed(1)}`;
  };
  return [at(26, -14), at(36, -9), at(36, 9), at(26, 14)].join('L');
}).join('L');

const GearIcon = () => (
  <svg width="78" height="78" viewBox="0 0 78 78" fill="none" stroke="#8a8c90" strokeWidth="3.500" strokeLinejoin="round">
    <path d={`M${TEETH}Z`} />
    <circle cx="39" cy="39" r="18" />
    <circle cx="39" cy="39" r="10" fill="#4a4c4e" stroke="none" />
  </svg>
);

export default function App() {
  return (
    <Screen>
      <GlobalStyle />
      <StatusBar>
        <StatusGroup $gap={25}>
          <span>SKT 12:51</span>
          <svg width="32" height="32" viewBox="0 0 32 32">
            <rect x="1.500" y="2.500" width="28" height="27" rx="2" fill="none" stroke="#bdbdbd" strokeWidth="3" />
            <circle cx="9" cy="10" r="3.500" fill="#bdbdbd" />
            <path d="M2 22L9 16L13 19L22 12L30 19V29H2Z" fill="#bdbdbd" />
          </svg>
          <svg width="26" height="34" viewBox="0 0 26 34" fill="none" stroke="#bdbdbd" strokeWidth="3.500">
            <circle cx="7" cy="26" r="5" />
            <path d="M12.500 26V2C19 3 22 7 23 14" />
          </svg>
        </StatusGroup>
        <StatusGroup $gap={10}>
          <svg width="33" height="32" viewBox="0 0 33 32">
            <circle cx="16.500" cy="17" r="13" fill="#bdbdbd" />
            <path d="M2 7L8 2M31 7L25 2M5 30L9 26M28 30L24 26" stroke="#bdbdbd" strokeWidth="3.500" />
            <path d="M16.500 9V18H23" stroke="#000" strokeWidth="3.500" fill="none" />
          </svg>
          <svg width="29" height="34" viewBox="0 0 29 34" fill="none" stroke="#bdbdbd" strokeWidth="3.500">
            <path d="M5 9L24 25L14.500 31V3L24 9L5 25" />
            <path d="M0 13L4 17L0 21ZM29 13L25 17L29 21Z" fill="#bdbdbd" stroke="none" />
          </svg>
          <svg width="32" height="32" viewBox="0 0 32 32">
            <path d="M0 11H7L19 22V31L9 23H0ZM19 1V13L13 7Z" fill="#bdbdbd" />
            <path d="M2 2L20 20" stroke="#bdbdbd" strokeWidth="3" />
            <path d="M30 1L25 6L30 11L25 16L30 21L25 26L30 31" fill="none" stroke="#bdbdbd" strokeWidth="3" />
          </svg>
          <svg width="26" height="32" viewBox="0 0 26 32">
            <path d="M13 0A12.500 12.500 0 0 1 25.500 12.500C25.500 20 17 26 13 32C9 26 .5 20 .5 12.500A12.500 12.500 0 0 1 13 0Z" fill="#bdbdbd" />
            <circle cx="13" cy="12" r="5" fill="#000" />
          </svg>
          <Network>
            LTE
            <svg width="24" height="14" viewBox="0 0 24 14" fill="none" stroke="#555" strokeWidth="3.500">
              <path d="M6 0V12M1 7L6 12L11 7M18 14V2M13 7L18 2L23 7" />
            </svg>
          </Network>
          <svg width="28" height="32" viewBox="0 0 28 32" fill="none" stroke="#bdbdbd" strokeWidth="3" strokeLinecap="round">
            <path d="M2 26V29M10 18V29M18 10V29M26 3V29" />
          </svg>
          <Percent>40%</Percent>
          <svg width="21" height="34" viewBox="0 0 21 34">
            <path d="M6 1H15V5H19Q21 5 21 7V21H0V7Q0 5 2 5H6Z" fill="#4e4e4e" />
            <path d="M0 21H21V31Q21 33 19 33H2Q0 33 0 31Z" fill="#bdbdbd" />
          </svg>
        </StatusGroup>
      </StatusBar>

      <Header>
        <IconButton aria-label="뒤로">
          <svg width="72" height="52" viewBox="0 0 72 52" fill="none" stroke="#d23200" strokeWidth="11">
            <path d="M71 26H12" />
            <path d="M29 4L8 26L29 48" />
          </svg>
        </IconButton>
        <Title>운동정보</Title>
        <HeaderActions>
          <IconButton aria-label="새로고침">
            <svg width="78" height="61" viewBox="476 286 234 182" fill="none" stroke="#868686" strokeWidth="25">
              <path d="M548 311A76 76 0 0 1 667 385" />
              <path d="M638 443A76 76 0 0 1 518 368" />
              <path d="M622 383H708L665 430ZM478 372H565L521 325Z" fill="#868686" stroke="none" />
            </svg>
          </IconButton>
          <IconButton aria-label="삭제">
            <svg width="63" height="79" viewBox="940 258 190 238" fill="none" stroke="#868686" strokeWidth="11" strokeLinecap="round" strokeLinejoin="round">
              <rect x="947" y="293" width="175" height="26" rx="5" />
              <path d="M999 288V275Q1000 266 1010 266H1060Q1071 266 1072 275V288" />
              <path d="M958 335L968 470Q970 487 985 487H1085Q1099 487 1101 470L1110 335" />
              <path d="M994 352L1000 456M1035 352V456M1076 352L1070 456" />
            </svg>
          </IconButton>
        </HeaderActions>
      </Header>

      <MapView>
        <TrailMap />
        <SideHandle />
        <GearButton aria-label="지도 설정"><GearIcon /></GearButton>
        <MapTypes>
          <MapType $active>일반</MapType>
          <MapType>위성</MapType>
        </MapTypes>
        <MapFooter>
          <Copyright>© NAVER Corp.</Copyright>
          <NaverLink href="#naver">NAVER</NaverLink>
          <ScaleBar><ScaleText>1000m</ScaleText></ScaleBar>
        </MapFooter>
      </MapView>

      <Details>
        <AutoRunRow>
          <AutoRunButton>
            <svg width="60" height="72" viewBox="0 0 60 72">
              <path d="M30 4C45 4 56.500 15 56.500 30C56.500 46 42 60 30 68C18 60 3.500 46 3.500 30C3.500 15 15 4 30 4Z" fill="none" stroke="#000" strokeWidth="5.500" />
              <path d="M22 17L42 30L22 44Z" />
            </svg>
            자동주행
          </AutoRunButton>
        </AutoRunRow>
        <Card>
          <CardTitle>고도 (Elevation)</CardTitle>
          <ElevationChart />
        </Card>
        <ActionArea>
          <FollowButton>따라가기</FollowButton>
        </ActionArea>
        <FabStack>
          <Fab $accent aria-label="공유"><ShareIcon size={66} stroke={4} /></Fab>
          <Fab aria-label="편집">
            <svg width="66" height="66" viewBox="0 0 66 66" fill="none" stroke="currentColor" strokeWidth="4" strokeLinejoin="round" strokeLinecap="round">
              <path d="M16 61L3 63L6 43L42 8C52 -2 70 14 60 25L24 60L6 43" />
              <path d="M42 8L60 25M51 17L15 51" />
            </svg>
          </Fab>
        </FabStack>
      </Details>

      <Stats>
        <Stat><ShareIcon size={42} stroke={3} />0</Stat>
        <Stat>
          <svg width="42" height="40" viewBox="0 0 42 40" fill="none" stroke="#000" strokeWidth="2" strokeLinecap="round">
            <path d="M21 1V27M13 20L21 28L29 20M1 19V30Q1 37 8 37H34Q41 37 41 30V19" />
          </svg>
          2
        </Stat>
      </Stats>

      <NavBar>
        <IconButton aria-label="최근 앱">
          <svg width="40" height="42" viewBox="0 0 40 42" stroke="#8e8e8e" strokeWidth="5" strokeLinecap="round">
            <path d="M4 3V38M20 3V38M36 3V38" />
          </svg>
        </IconButton>
        <IconButton aria-label="홈">
          <svg width="42" height="42" viewBox="0 0 42 42" fill="none" stroke="#8e8e8e" strokeWidth="5">
            <rect x="2.500" y="2.500" width="37" height="37" rx="12" />
          </svg>
        </IconButton>
        <IconButton aria-label="이전">
          <svg width="26" height="42" viewBox="0 0 26 42" fill="none" stroke="#8e8e8e" strokeWidth="5" strokeLinecap="round">
            <path d="M22 3L4 21L22 38" />
          </svg>
        </IconButton>
      </NavBar>
    </Screen>
  );
}
